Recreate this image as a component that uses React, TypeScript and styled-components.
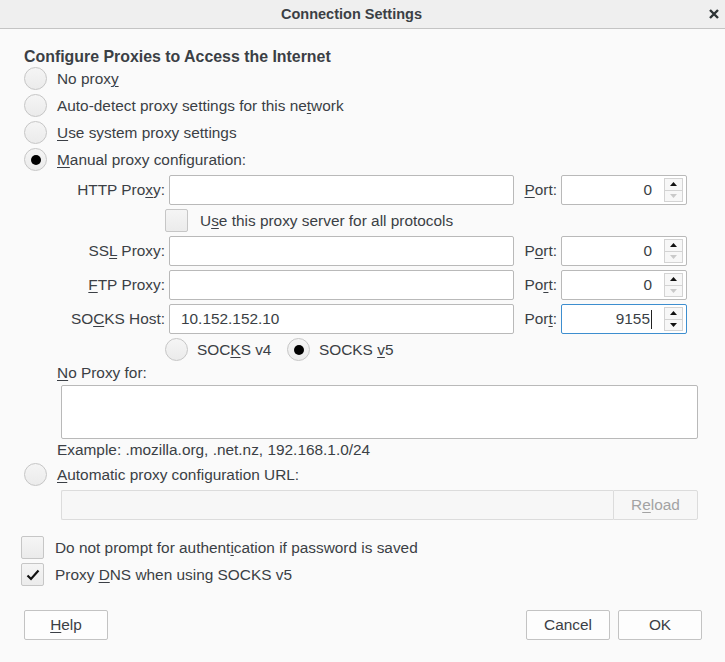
import React from "react";
import styled, { createGlobalStyle } from "styled-components";

const Global = createGlobalStyle`
  html, body { margin: 0; padding: 0; background: #fafafa; }
  body { font-family: "Liberation Sans", Arial, sans-serif; font-size: 15.4px; color: #3b3f45; }
  * { box-sizing: border-box; }
`;

const Dialog = styled.div`
  width: 725px;
  height: 662px;
  background: #fafafa;
  display: flex;
  flex-direction: column;
`;

const TitleBar = styled.div`
  height: 29px;
  flex: none;
  background: #efefef;
  border-bottom: 1px solid #c4c4c4;
  display: flex;
  align-items: center;
  justify-content: center;
  position: relative;
  padding-right: 22px;
`;

const Title = styled.div`
  font-weight: bold;
  font-size: 14.5px;
  color: #3b3f45;
`;

const Close = styled.div`
  position: absolute;
  right: 5px;
  top: 8px;
  width: 12px;
  height: 12px;
  display: flex;
`;

const Body = styled.div`
  padding: 18px 23px 0 24px;
  display: flex;
  flex-direction: column;
`;

const Heading = styled.div`
  font-weight: bold;
  font-size: 15.9px;
  line-height: 20px;
  height: 18px;
  white-space: nowrap;
`;

const Mn = styled.span`
  text-decoration: underline;
  text-underline-offset: 2px;
  text-decoration-thickness: 1px;
`;

const RadioRow = styled.div<{ $h?: number; $mt?: number }>`
  display: flex;
  align-items: center;
  gap: 10px;
  height: ${(p) => p.$h ?? 27}px;
  margin-top: ${(p) => p.$mt ?? 0}px;
  white-space: nowrap;
`;

const RadioCircle = styled.span<{ $on?: boolean }>`
  flex: none;
  width: 23px;
  height: 23px;
  border-radius: 50%;
  border: 1px solid #c6c6c6;
  background: linear-gradient(#f5f5f5, #ebebeb);
  display: flex;
  align-items: center;
  justify-content: center;
  &::after {
    content: "";
    display: ${(p) => (p.$on ? "block" : "none")};
    width: 10px;
    height: 10px;
    border-radius: 50%;
    background: #000;
  }
`;

const ProxyGrid = styled.div`
  margin-top: 2px;
  margin-left: 33px;
  display: grid;
  grid-template-columns: 108px 345px 39px 126px;
  column-gap: 4px;
  row-gap: 4px;
  align-items: center;
`;

const FieldLabel = styled.div`
  text-align: right;
  white-space: nowrap;
`;

const TextBox = styled.div<{ $focus?: boolean; $align?: string }>`
  height: 30px;
  background: #fff;
  border: 1px solid ${(p) => (p.$focus ? "#3d8ecf" : "#b9b9b9")};
  border-radius: 2px;
  display: flex;
  align-items: center;
  justify-content: ${(p) => p.$align ?? "flex-start"};
  padding: 0 11px;
  position: relative;
  white-space: nowrap;
`;

const PortBox = styled(TextBox)`
  padding-right: 34px;
`;

const Caret = styled.span`
  display: inline-block;
  width: 1px;
  height: 19px;
  background: #222;
  margin-left: 1px;
`;

const Spinner = styled.div`
  position: absolute;
  right: 3px;
  top: 2px;
  width: 19px;
  height: 24px;
  border: 1px solid #d3d3d3;
  display: flex;
  flex-direction: column;
  background: #f7f7f7;
`;

const SpinHalf = styled.div<{ $top?: boolean }>`
  flex: 1;
  display: flex;
  align-items: center;
  justify-content: center;
  border-top: ${(p) => (p.$top ? "none" : "1px solid #d3d3d3")};
`;

const Arrow = ({ up, on }: { up?: boolean; on: boolean }) => (
  <svg width="7" height="4" viewBox="0 0 7 4">
    <polygon
      points={up ? "3.5,0 7,4 0,4" : "0,0 7,0 3.5,4"}
      fill={on ? "#111" : "#c9c9c9"}
    />
  </svg>
);

const SpanRest = styled.div`
  grid-column: 2 / span 3;
  display: flex;
  align-items: center;
  height: 23px;
  margin-left: -4px;
  white-space: nowrap;
`;

const CheckBox = styled.span`
  flex: none;
  width: 23px;
  height: 23px;
  border: 1px solid #c6c6c6;
  border-radius: 2px;
  background: linear-gradient(#f5f5f5, #ebebeb);
  display: flex;
  align-items: center;
  justify-content: center;
`;

const InlineOption = styled.span<{ $gap: number; $w?: number }>`
  display: flex;
  align-items: center;
  gap: ${(p) => p.$gap}px;
  width: ${(p) => (p.$w ? `${p.$w}px` : "auto")};
`;

const CheckLabel = styled.span<{ $gap: number }>`
  margin-left: ${(p) => p.$gap}px;
`;

const SubLabel = styled.div<{ $mt: number }>`
  margin-left: 33px;
  margin-top: ${(p) => p.$mt}px;
  line-height: 18px;
  height: 18px;
  white-space: nowrap;
`;

const TextArea = styled.div`
  margin-left: 37px;
  margin-top: 3px;
  width: 637px;
  height: 54px;
  background: #fff;
  border: 1px solid #b9b9b9;
  border-radius: 2px;
`;

const UrlRow = styled.div`
  margin-left: 37px;
  margin-top: 4px;
  width: 637px;
  height: 30px;
  display: flex;
`;

const UrlInput = styled.div`
  flex: 1;
  border: 1px solid #dcdcdc;
  border-right: none;
  background: #f7f7f7;
  border-radius: 2px 0 0 2px;
`;

const ReloadButton = styled.div`
  width: 85px;
  border: 1px solid #dcdcdc;
  background: #f7f7f7;
  border-radius: 0 2px 2px 0;
  color: #a3a3a3;
  display: flex;
  align-items: center;
  justify-content: center;
`;

const CheckRow = styled.div<{ $mt: number }>`
  margin-left: -3px;
  margin-top: ${(p) => p.$mt}px;
  height: 23px;
  display: flex;
  align-items: center;
  gap: 11px;
  white-space: nowrap;
`;

const Footer = styled.div`
  margin-top: 24px;
  display: flex;
  align-items: center;
`;

const Button = styled.div`
  width: 84px;
  height: 30px;
  border: 1px solid #c3c3c3;
  border-radius: 2px;
  background: #fdfdfd;
  display: flex;
  align-items: center;
  justify-content: center;
`;

const Spacer = styled.div`
  flex: 1;
`;

const ButtonGroup = styled.div`
  display: flex;
  gap: 8px;
`;

const Check = () => (
  <svg width="14" height="12" viewBox="0 0 14 12">
    <path d="M1.5 6.5 L5 10 L12.5 1.5" fill="none" stroke="#111" strokeWidth="2.2" />
  </svg>
);

const CloseIcon = () => (
  <svg width="12" height="12" viewBox="0 0 12 12">
    <path d="M2 2 L10 10 M10 2 L2 10" stroke="#2e3436" strokeWidth="2.4" />
  </svg>
);

type ProxyRowProps = {
  label: React.ReactNode;
  host?: string;
  port: string;
  portLabel: React.ReactNode;
  focus?: boolean;
};

const ProxyRow = ({ label, host, port, portLabel, focus }: ProxyRowProps) => (
  <>
    <FieldLabel>{label}</FieldLabel>
    <TextBox>{host}</TextBox>
    <FieldLabel>{portLabel}</FieldLabel>
    <PortBox $align="flex-end" $focus={focus}>
      {port}
      {focus && <Caret />}
      <Spinner>
        <SpinHalf $top>
          <Arrow up on />
        </SpinHalf>
        <SpinHalf>
          <Arrow on={port !== "0"} />
        </SpinHalf>
      </Spinner>
    </PortBox>
  </>
);

export default function App() {
  return (
    <>
      <Global />
      <Dialog>
        <TitleBar>
          <Title>Connection Settings</Title>
          <Close>
            <CloseIcon />
          </Close>
        </TitleBar>
        <Body>
          <Heading>Configure Proxies to Access the Internet</Heading>
          <RadioRow>
            <RadioCircle />
            <span>
              No prox<Mn>y</Mn>
            </span>
          </RadioRow>
          <RadioRow>
            <RadioCircle />
            <span>
              Auto-detect proxy settings for this ne<Mn>t</Mn>work
            </span>
          </RadioRow>
          <RadioRow>
            <RadioCircle />
            <span>
              <Mn>U</Mn>se system proxy settings
            </span>
          </RadioRow>
          <RadioRow>
            <RadioCircle $on />
            <span>
              <Mn>M</Mn>anual proxy configuration:
            </span>
          </RadioRow>
          <ProxyGrid>
            <ProxyRow
              label={
                <>
                  HTTP Pro<Mn>x</Mn>y:
                </>
              }
              port="0"
              portLabel={
                <>
                  <Mn>P</Mn>ort:
                </>
              }
            />
            <SpanRest>
              <CheckBox />
              <CheckLabel $gap={12}>
                U<Mn>s</Mn>e this proxy server for all protocols
              </CheckLabel>
            </SpanRest>
            <ProxyRow
              label={
                <>
                  SS<Mn>L</Mn> Proxy:
                </>
              }
              port="0"
              portLabel={
                <>
                  P<Mn>o</Mn>rt:
                </>
              }
            />
            <ProxyRow
              label={
                <>
                  <Mn>F</Mn>TP Proxy:
                </>
              }
              port="0"
              portLabel={
                <>
                  Po<Mn>r</Mn>t:
                </>
              }
            />
            <ProxyRow
              label={
                <>
                  SO<Mn>C</Mn>KS Host:
                </>
              }
              host="10.152.152.10"
              port="9155"
              focus
              portLabel={
                <>
                  Por<Mn>t</Mn>:
                </>
              }
            />
            <SpanRest>
              <InlineOption $gap={9} $w={122}>
                <RadioCircle />
                <span>
                  SOC<Mn>K</Mn>S v4
                </span>
              </InlineOption>
              <InlineOption $gap={9}>
                <RadioCircle $on />
                <span>
                  SOCKS <Mn>v</Mn>5
                </span>
              </InlineOption>
            </SpanRest>
          </ProxyGrid>
          <SubLabel $mt={3}>
            <Mn>N</Mn>o Proxy for:
          </SubLabel>
          <TextArea />
          <SubLabel $mt={2}>Example: .mozilla.org, .net.nz, 192.168.1.0/24</SubLabel>
          <RadioRow $h={23} $mt={4}>
            <RadioCircle />
            <span>
              <Mn>A</Mn>utomatic proxy configuration URL:
            </span>
          </RadioRow>
          <UrlRow>
            <UrlInput />
            <ReloadButton>
              <span>
                R<Mn>e</Mn>load
              </span>
            </ReloadButton>
          </UrlRow>
          <CheckRow $mt={16}>
            <CheckBox />
            <span>
              Do not prompt for authent<Mn>i</Mn>cation if password is saved
            </span>
          </CheckRow>
          <CheckRow $mt={4}>
            <CheckBox>
              <Check />
            </CheckBox>
            <span>
              Proxy <Mn>D</Mn>NS when using SOCKS v5
            </span>
          </CheckRow>
          <Footer>
            <Button>
              <span>
                <Mn>H</Mn>elp
              </span>
            </Button>
            <Spacer />
            <ButtonGroup>
              <Button>Cancel</Button>
              <Button>OK</Button>
            </ButtonGroup>
          </Footer>
        </Body>
      </Dialog>
    </>
  );
}
